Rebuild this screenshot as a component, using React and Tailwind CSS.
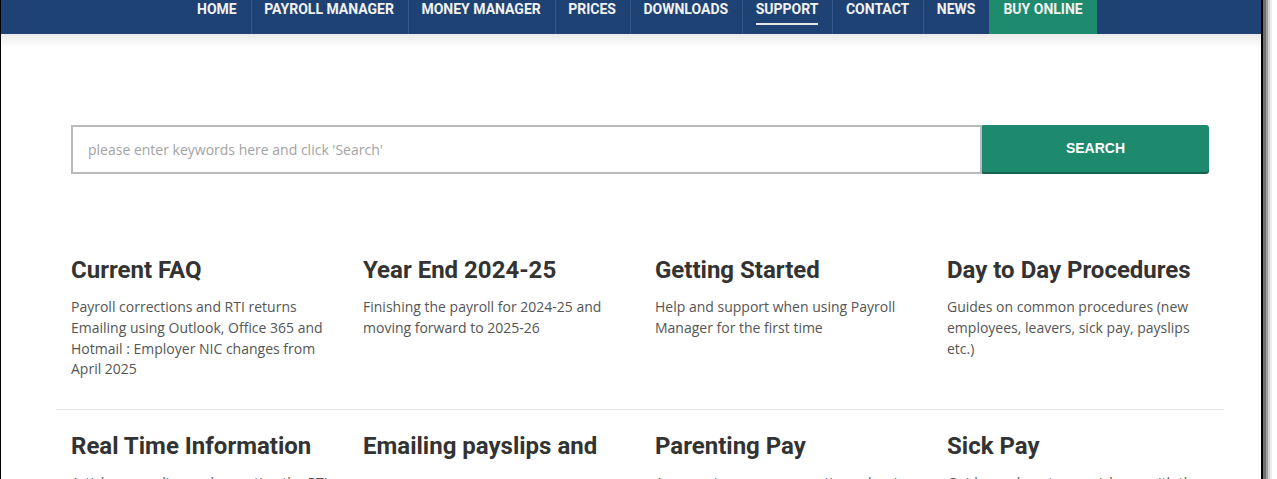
import React from 'react'

const navItems = ['Home', 'Payroll Manager', 'Money Manager', 'Prices', 'Downloads', 'Support', 'Contact', 'News']

const topics = [
    [
        { title: 'Current FAQ', text: 'Payroll corrections and RTI returns Emailing using Outlook, Office 365 and Hotmail : Employer NIC changes from April 2025' },
        { title: 'Year End 2024-25', text: 'Finishing the payroll for 2024-25 and moving forward to 2025-26' },
        { title: 'Getting Started', text: 'Help and support when using Payroll Manager for the first time' },
        { title: 'Day to Day Procedures', text: 'Guides on common procedures (new employees, leavers, sick pay, payslips etc.)' },
    ],
    [
        { title: 'Real Time Information', text: 'Articles regarding and reporting the RTI submissions to HMRC' },
        { title: 'Emailing payslips and', text: '' },
        { title: 'Parenting Pay', text: 'Answers to common questions about maternity and paternity pay' },
        { title: 'Sick Pay', text: 'Guides on how to pay sick pay with the software' },
    ],
]

function Topic({ title, text }) {
    return (
        <div className="px-[15px]">
            <h3 className="font-['Roboto',sans-serif] font-bold text-[24px] leading-[26.4px] text-[#333]">
                {title}
            </h3>
            {text && (
                <p className="mt-[14px] font-['Open_Sans',sans-serif] text-[14px] leading-[20.6px] text-[#555]">
                    {text}
                </p>
            )}
        </div>
    )
}

export default function App() {
    return (
        <div className="flex w-[1277px] h-[479px] overflow-hidden bg-white">
            <div className="w-px bg-black shrink-0" />

            <div className="w-[1260px] shrink-0 flex flex-col">
                <nav className="h-[34px] shrink-0 bg-[#1f4275] flex pl-[182px] font-['Roboto',sans-serif]">
                    {navItems.map((item, i) => (
                        <div
                            key={item}
                            className={
                                'h-full pr-[14px] text-[14px] font-bold uppercase leading-[18px] text-[#f2f2f2] ' +
                                (i > 0 ? 'pl-[12.5px] border-l border-[#34578a]' : 'pl-[14px]')
                            }
                        >
                            <span className={item === 'Support' ? 'inline-block border-b-2 border-[#e6e6e6] pb-[5px]' : 'inline-block'}>
                                {item}
                            </span>
                        </div>
                    ))}
                    <div className="h-full px-[14px] bg-[#1e8a6e] text-[14px] font-bold uppercase leading-[18px] text-[#f2f2f2]">
                        Buy Online
                    </div>
                </nav>

                <div className="flex-1 bg-[linear-gradient(to_bottom,#ebebeb,#ffffff_14px)] pt-[91px]">
                    <div className="ml-[55px] w-[1168px]">
                        <form className="flex h-[49px] mx-[15px]" onSubmit={e => e.preventDefault()}>
                            <input
                                type="text"
                                placeholder="please enter keywords here and click 'Search'"
                                className="flex-1 h-full border-2 border-[#bababa] pl-[15px] font-['Open_Sans',sans-serif] text-[14px] text-[#444] placeholder:text-[#a3a3a3] outline-none"
                            />
                            <button
                                type="submit"
                                className="w-[227px] h-[47px] bg-[#1d8a6e] rounded-r-[3px] rounded-l-[1px] shadow-[0_2px_0_#14634f] font-['Liberation_Sans',Arial,sans-serif] font-bold text-[14px] text-white"
                            >
                                SEARCH
                            </button>
                        </form>

                        <div className="grid grid-cols-4 pt-[83px] pb-[29px] border-b border-[#e6e6e6]">
                            {topics[0].map(t => <Topic key={t.title} {...t} />)}
                        </div>
                        <div className="grid grid-cols-4 pt-[23px]">
                            {topics[1].map(t => <Topic key={t.title} {...t} />)}
                        </div>
                    </div>
                </div>
            </div>

            <div className="w-[2px] bg-black shrink-0" />
            <div className="w-[3px] bg-[#6e6e6e] shrink-0" />
            <div className="w-[2px] bg-[#a0a0a0] shrink-0" />
            <div className="w-[2px] bg-[#d0d0d0] shrink-0" />
            <div className="w-[2px] bg-[#ececec] shrink-0" />
        </div>
    )
}
